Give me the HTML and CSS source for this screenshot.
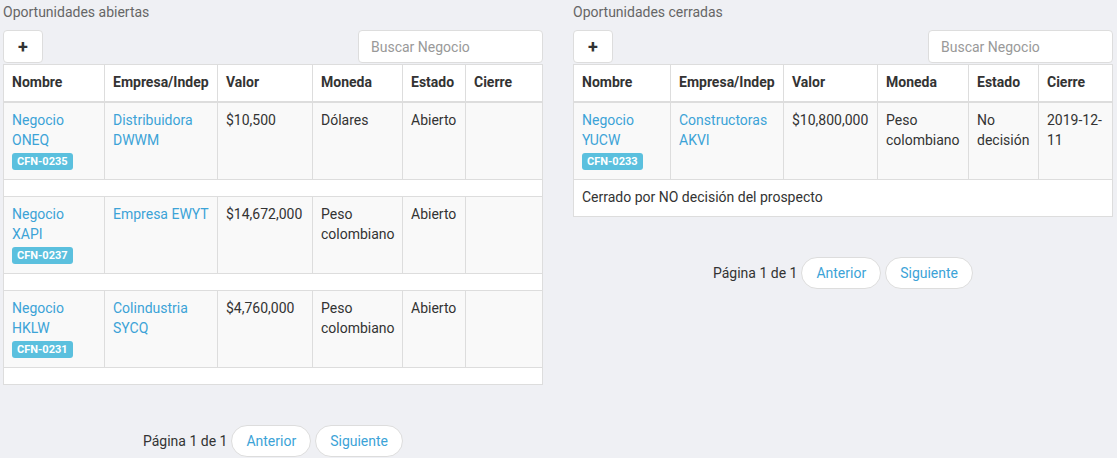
FILE: index.html
```html
<!DOCTYPE html>
<html lang="es">
<head>
  <meta charset="UTF-8">
  <title>Oportunidades</title>
  <link rel="stylesheet" href="styles.css">
</head>
<body>
  <div class="contenedor">
    <div class="panel">
      <div class="titulo">Oportunidades abiertas</div>
      <div class="barra">
        <button class="btnMas">+</button>
        <input class="buscar" type="text" placeholder="Buscar Negocio">
      </div>
      <table class="tabla abiertas">
        <thead>
          <tr><th>Nombre</th><th>Empresa/Indep</th><th>Valor</th><th>Moneda</th><th>Estado</th><th>Cierre</th></tr>
        </thead>
        <tbody>
          <tr class="fila">
            <td><a href="#">Negocio ONEQ</a><br><span class="etiqueta">CFN-0235</span></td>
            <td><a href="#">Distribuidora DWWM</a></td>
            <td>$10,500</td><td>Dólares</td><td>Abierto</td><td></td>
          </tr>
          <tr class="nota"><td colspan="6"></td></tr>
          <tr class="fila">
            <td><a href="#">Negocio XAPI</a><br><span class="etiqueta">CFN-0237</span></td>
            <td><a href="#">Empresa EWYT</a></td>
            <td>$14,672,000</td><td>Peso colombiano</td><td>Abierto</td><td></td>
          </tr>
          <tr class="nota"><td colspan="6"></td></tr>
          <tr class="fila">
            <td><a href="#">Negocio HKLW</a><br><span class="etiqueta">CFN-0231</span></td>
            <td><a href="#">Colindustria SYCQ</a></td>
            <td>$4,760,000</td><td>Peso colombiano</td><td>Abierto</td><td></td>
          </tr>
          <tr class="nota"><td colspan="6"></td></tr>
        </tbody>
      </table>
      <div class="paginacion">
        <span>Página 1 de 1</span>
        <button class="pag">Anterior</button>
        <button class="pag">Siguiente</button>
      </div>
    </div>

    <div class="panel">
      <div class="titulo">Oportunidades cerradas</div>
      <div class="barra">
        <button class="btnMas">+</button>
        <input class="buscar" type="text" placeholder="Buscar Negocio">
      </div>
      <table class="tabla cerradas">
        <thead>
          <tr><th>Nombre</th><th>Empresa/Indep</th><th>Valor</th><th>Moneda</th><th>Estado</th><th>Cierre</th></tr>
        </thead>
        <tbody>
          <tr class="fila">
            <td><a href="#">Negocio YUCW</a><br><span class="etiqueta">CFN-0233</span></td>
            <td><a href="#">Constructoras AKVI</a></td>
            <td>$10,800,000</td><td>Peso colombiano</td><td>No decisión</td><td>2019-12-11</td>
          </tr>
          <tr class="nota"><td colspan="6">Cerrado por NO decisión del prospecto</td></tr>
        </tbody>
      </table>
      <div class="paginacion">
        <span>Página 1 de 1</span>
        <button class="pag">Anterior</button>
        <button class="pag">Siguiente</button>
      </div>
    </div>
  </div>
</body>
</html>
```

FILE: styles.css
```css
body {
    margin: 0;
    background: #eff0f4;
    font-family: Roboto, "Liberation Sans", sans-serif;
    font-size: 14px;
    line-height: 20px;
    color: #333;
}
.contenedor {
    display: flex;
    gap: 30px;
    padding: 2px 4px 0 3px;
}
.panel { width: 540px; }
.titulo { color: #666; margin-bottom: 8px; }
.barra {
    display: flex;
    justify-content: space-between;
    align-items: flex-end;
    padding-bottom: 1px;
}
.btnMas {
    width: 40px;
    height: 33px;
    background: #fff;
    border: 1px solid #ddd;
    border-radius: 4px;
    font-family: inherit;
    font-size: 18px;
    font-weight: bold;
    color: #333;
    padding: 0;
}
.buscar {
    width: 185px;
    height: 33px;
    box-sizing: border-box;
    border: 1px solid #ddd;
    border-radius: 4px;
    padding: 0 12px;
    font-family: inherit;
    font-size: 14px;
    outline: none;
}
.buscar::placeholder { color: #999; }
.tabla {
    width: 100%;
    border-collapse: collapse;
    background: #fff;
    border: 1px solid #ddd;
    table-layout: fixed;
}
.tabla th, .tabla td {
    border: 1px solid #ddd;
    padding: 7px 8px 9px;
    text-align: left;
    vertical-align: top;
}
.tabla th { border-bottom: 2px solid #ddd; font-weight: bold; color: #333; }
.fila td { background: #f9f9f9; }
.nota td { background: #fff; }
.tabla a { color: #3ca3d7; text-decoration: none; }
.etiqueta {
    display: inline-block;
    vertical-align: top;
    margin-top: 3px;
    background: #5bc0de;
    color: #fff;
    font-size: 11px;
    font-weight: bold;
    line-height: 17px;
    padding: 0 5px;
    border-radius: 3px;
}
.abiertas th:nth-child(1) { width: 84px; }
.abiertas th:nth-child(2) { width: 96px; }
.abiertas th:nth-child(3) { width: 78px; }
.abiertas th:nth-child(4) { width: 73px; }
.abiertas th:nth-child(5) { width: 46px; }
.cerradas th:nth-child(1) { width: 80px; }
.cerradas th:nth-child(2) { width: 96px; }
.cerradas th:nth-child(3) { width: 77px; }
.cerradas th:nth-child(4) { width: 74px; }
.cerradas th:nth-child(5) { width: 53px; }
.paginacion {
    display: flex;
    justify-content: center;
    align-items: center;
    gap: 4px;
    margin-top: 40px;
}
.pag {
    height: 32px;
    background: #fff;
    border: 1px solid #ddd;
    border-radius: 16px;
    padding: 0 14px;
    font-family: inherit;
    font-size: 14px;
    color: #3ca3d7;
}
```
